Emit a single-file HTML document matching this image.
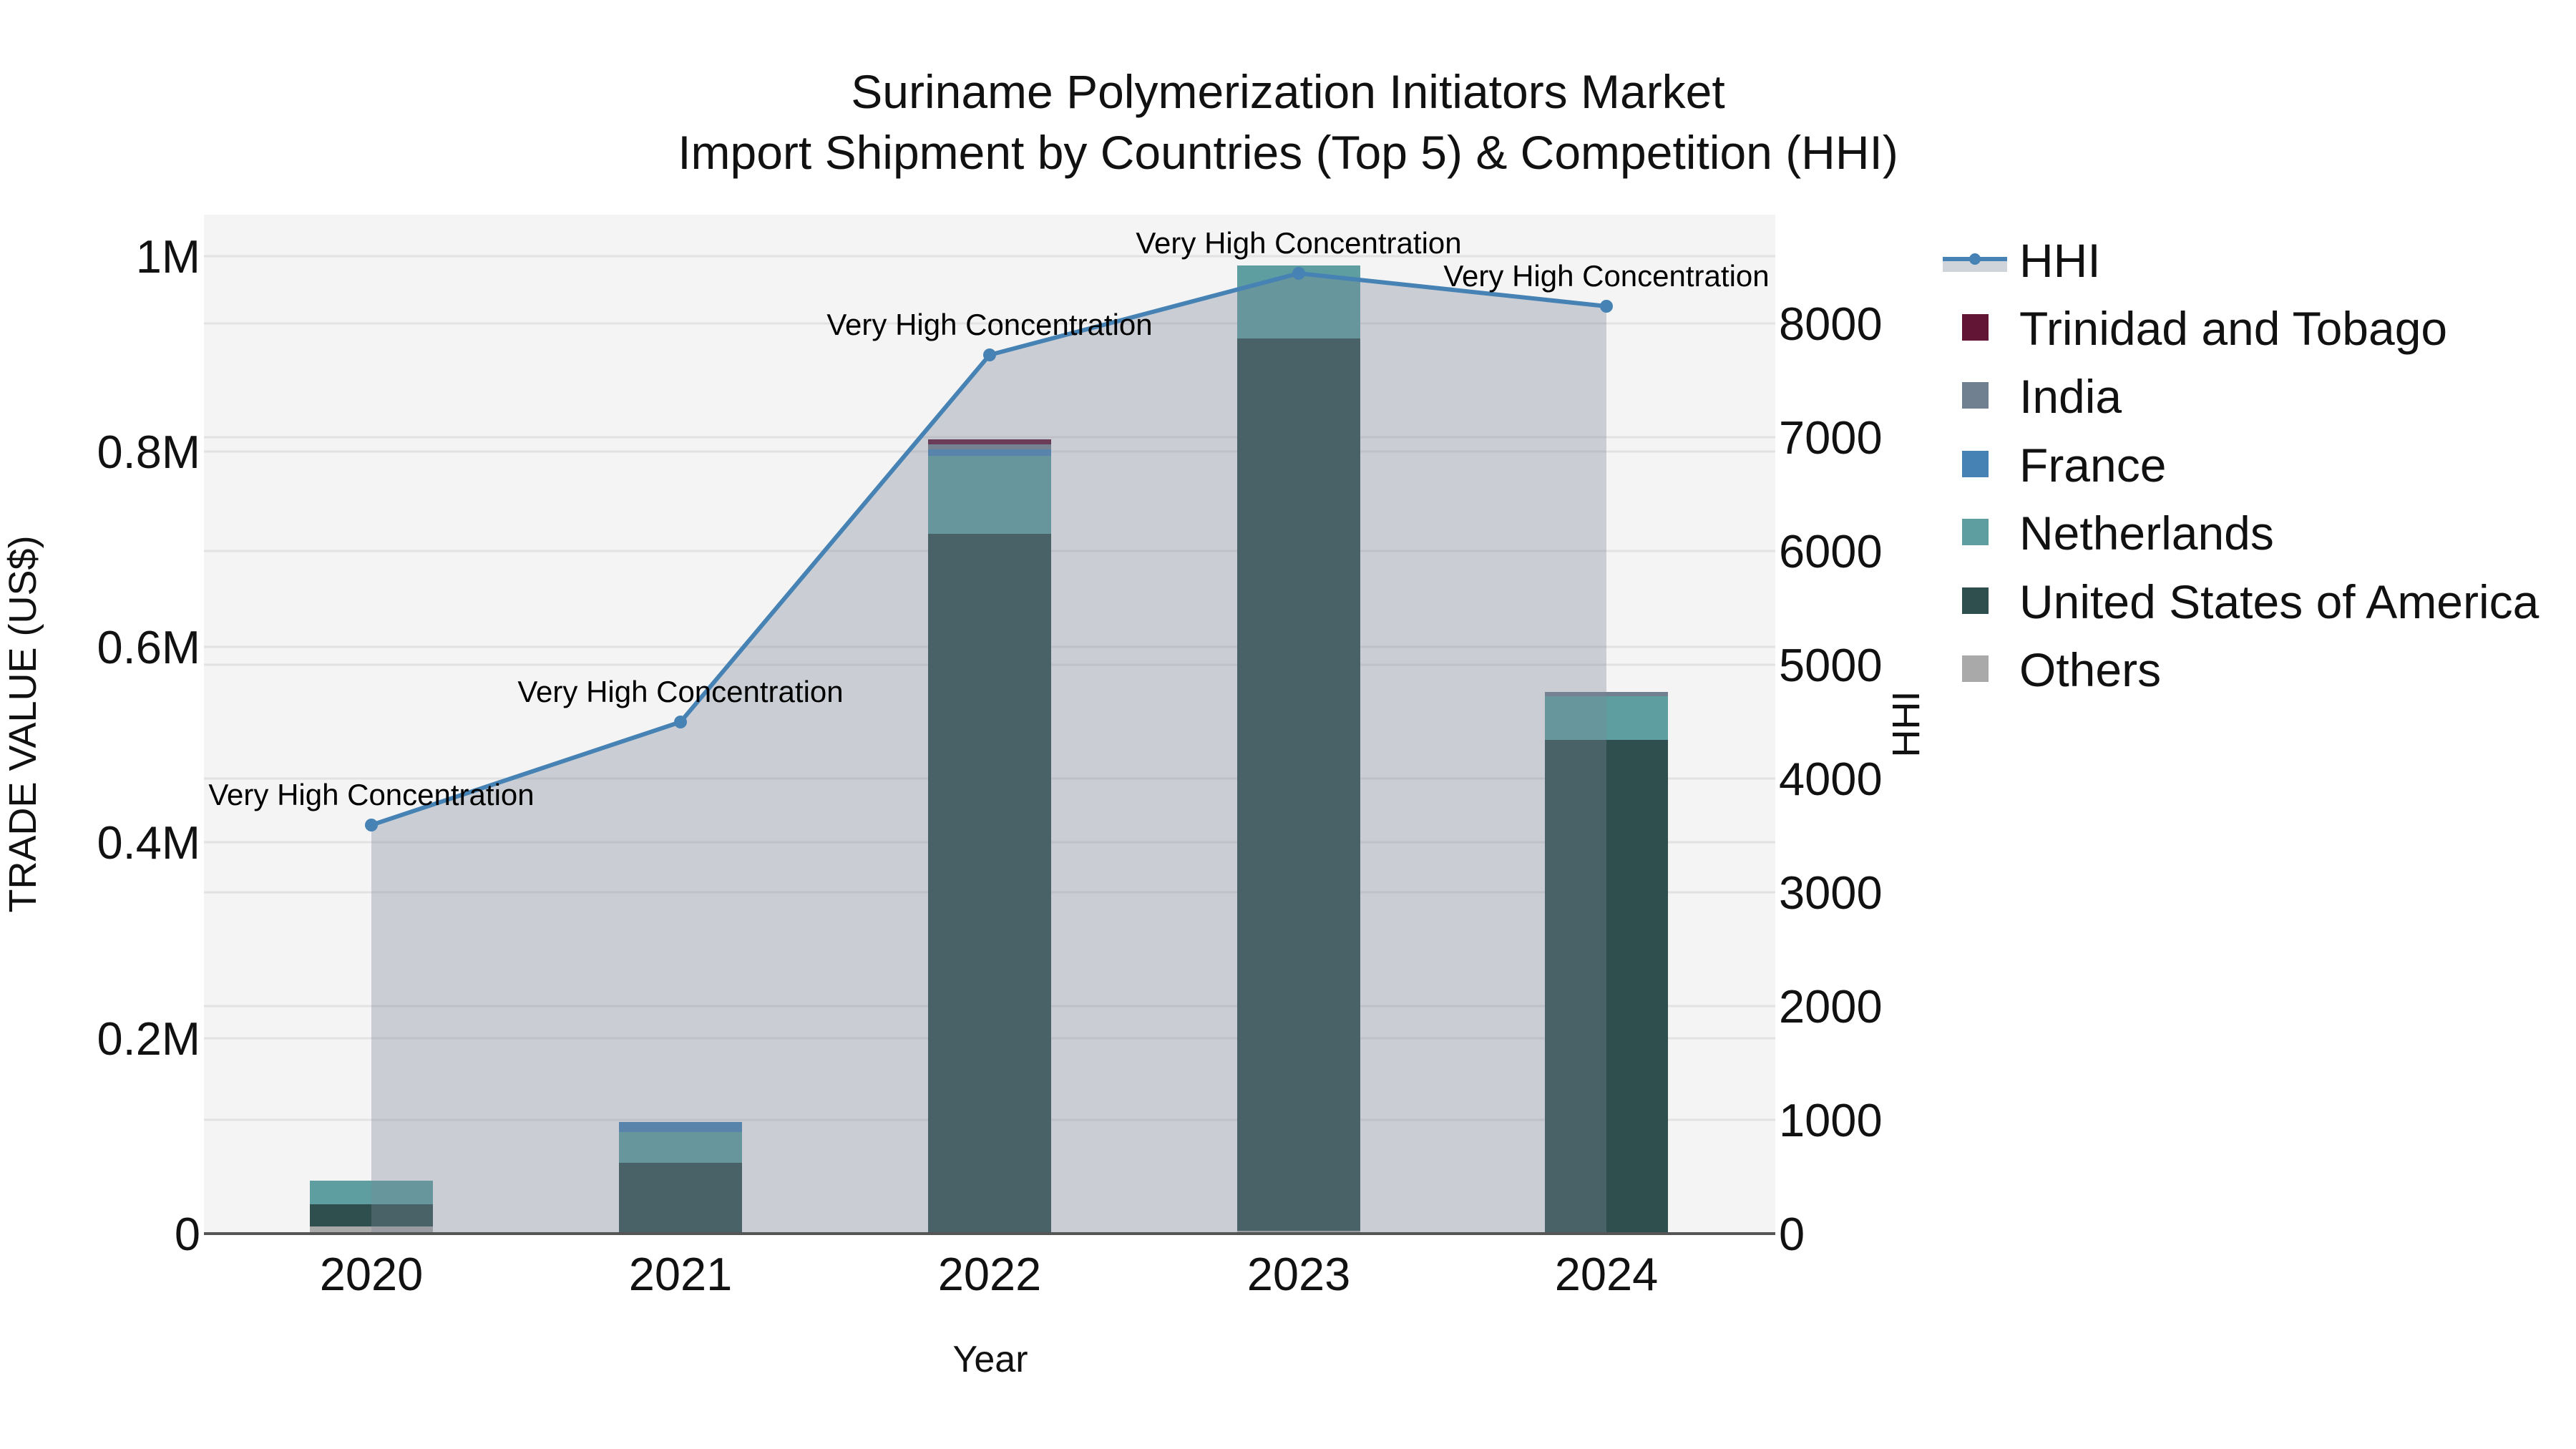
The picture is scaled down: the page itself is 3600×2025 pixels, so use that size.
<!DOCTYPE html>
<html><head><meta charset="utf-8"><style>
html,body{margin:0;padding:0;background:#fff;}
svg{display:block;font-family:"Liberation Sans",Arial,sans-serif;}
</style></head><body>
<svg width="3600" height="2025" viewBox="0 0 3600 2025" xmlns="http://www.w3.org/2000/svg">
<rect width="3600" height="2025" fill="#fff"/>
<rect x="285" y="300" width="2196" height="1424" fill="#f4f4f4"/>
<g stroke="#e2e2e2" stroke-width="3">
<line x1="285" x2="2481" y1="1451" y2="1451"/><line x1="285" x2="2481" y1="1177" y2="1177"/>
<line x1="285" x2="2481" y1="904" y2="904"/><line x1="285" x2="2481" y1="631" y2="631"/>
<line x1="285" x2="2481" y1="358" y2="358"/>
<line x1="285" x2="2481" y1="1565" y2="1565"/><line x1="285" x2="2481" y1="1406" y2="1406"/>
<line x1="285" x2="2481" y1="1247" y2="1247"/><line x1="285" x2="2481" y1="1088" y2="1088"/>
<line x1="285" x2="2481" y1="929" y2="929"/><line x1="285" x2="2481" y1="770" y2="770"/>
<line x1="285" x2="2481" y1="611" y2="611"/><line x1="285" x2="2481" y1="452" y2="452"/>
</g>
<g>
<rect x="433" y="1714" width="172" height="10" fill="#a9a9a9"/>
<rect x="433" y="1683" width="172" height="31" fill="#2f4f4f"/>
<rect x="433" y="1650" width="172" height="33" fill="#5f9ea0"/>

<rect x="865" y="1625" width="172" height="99" fill="#2f4f4f"/>
<rect x="865" y="1582" width="172" height="43" fill="#5f9ea0"/>
<rect x="865" y="1568" width="172" height="14" fill="#4682b4"/>

<rect x="1297" y="746" width="172" height="978" fill="#2f4f4f"/>
<rect x="1297" y="637" width="172" height="109" fill="#5f9ea0"/>
<rect x="1297" y="628" width="172" height="9" fill="#4682b4"/>
<rect x="1297" y="621" width="172" height="7" fill="#708090"/>
<rect x="1297" y="614" width="172" height="7" fill="#631535"/>

<rect x="1729" y="1720" width="172" height="4" fill="#a9a9a9"/>
<rect x="1729" y="473" width="172" height="1247" fill="#2f4f4f"/>
<rect x="1729" y="371" width="172" height="102" fill="#5f9ea0"/>

<rect x="2159" y="1034" width="172" height="690" fill="#2f4f4f"/>
<rect x="2159" y="973" width="172" height="61" fill="#5f9ea0"/>
<rect x="2159" y="967" width="172" height="6" fill="#708090"/>
</g>
<polygon points="519,1153 951,1009 1383,496 1815,382 2245,428 2245,1724 519,1724" fill="rgb(122,134,153)" fill-opacity="0.35"/>
<line x1="285" x2="2481" y1="1724" y2="1724" stroke="#555" stroke-width="4"/>
<polyline points="519,1153 951,1009 1383,496 1815,382 2245,428" fill="none" stroke="#4682b4" stroke-width="6" stroke-linejoin="round"/>
<g fill="#4682b4">
<circle cx="519" cy="1153" r="9"/><circle cx="951" cy="1009" r="9"/><circle cx="1383" cy="496" r="9"/><circle cx="1815" cy="382" r="9"/><circle cx="2245" cy="428" r="9"/>
</g>
<g font-size="42" fill="#000" text-anchor="middle">
<text x="519" y="1125">Very High Concentration</text>
<text x="951" y="981">Very High Concentration</text>
<text x="1383" y="468">Very High Concentration</text>
<text x="1815" y="354">Very High Concentration</text>
<text x="2245" y="400">Very High Concentration</text>
</g>
<g font-size="66" fill="#111" text-anchor="middle">
<text x="1800" y="151">Suriname Polymerization Initiators Market</text>
<text x="1800" y="236">Import Shipment by Countries (Top 5) &amp; Competition (HHI)</text>
</g>
<g font-size="65" fill="#111" text-anchor="end">
<text x="280" y="1747">0</text>
<text x="280" y="1474">0.2M</text>
<text x="280" y="1200">0.4M</text>
<text x="280" y="927">0.6M</text>
<text x="280" y="654">0.8M</text>
<text x="280" y="381">1M</text>
</g>
<g font-size="65" fill="#111" text-anchor="start">
<text x="2486" y="1747">0</text>
<text x="2486" y="1588">1000</text>
<text x="2486" y="1429">2000</text>
<text x="2486" y="1270">3000</text>
<text x="2486" y="1111">4000</text>
<text x="2486" y="952">5000</text>
<text x="2486" y="793">6000</text>
<text x="2486" y="634">7000</text>
<text x="2486" y="475">8000</text>
</g>
<g font-size="65" fill="#111" text-anchor="middle">
<text x="519" y="1803">2020</text>
<text x="951" y="1803">2021</text>
<text x="1383" y="1803">2022</text>
<text x="1815" y="1803">2023</text>
<text x="2245" y="1803">2024</text>
</g>
<text x="1384" y="1917" font-size="52" fill="#111" text-anchor="middle">Year</text>
<text transform="translate(50,1012) rotate(-90)" font-size="54" fill="#111" text-anchor="middle">TRADE VALUE (US$)</text>
<text transform="translate(2682,1012) rotate(-90)" font-size="54" fill="#111" text-anchor="middle">HHI</text>
<rect x="2715" y="362" width="90" height="18" fill="#cfd4db"/>
<line x1="2715" x2="2805" y1="362" y2="362" stroke="#4682b4" stroke-width="6"/>
<circle cx="2760" cy="362" r="8" fill="#4682b4"/>
<rect x="2742" y="439" width="37" height="37" fill="#631535"/>
<rect x="2742" y="534" width="37" height="37" fill="#708090"/>
<rect x="2742" y="630" width="37" height="37" fill="#4682b4"/>
<rect x="2742" y="725" width="37" height="37" fill="#5f9ea0"/>
<rect x="2742" y="821" width="37" height="37" fill="#2f4f4f"/>
<rect x="2742" y="916" width="37" height="37" fill="#a9a9a9"/>
<g font-size="66" fill="#111">
<text x="2822" y="387">HHI</text>
<text x="2822" y="482">Trinidad and Tobago</text>
<text x="2822" y="577">India</text>
<text x="2822" y="673">France</text>
<text x="2822" y="768">Netherlands</text>
<text x="2822" y="864">United States of America</text>
<text x="2822" y="959">Others</text>
</g>
</svg>
</body></html>
